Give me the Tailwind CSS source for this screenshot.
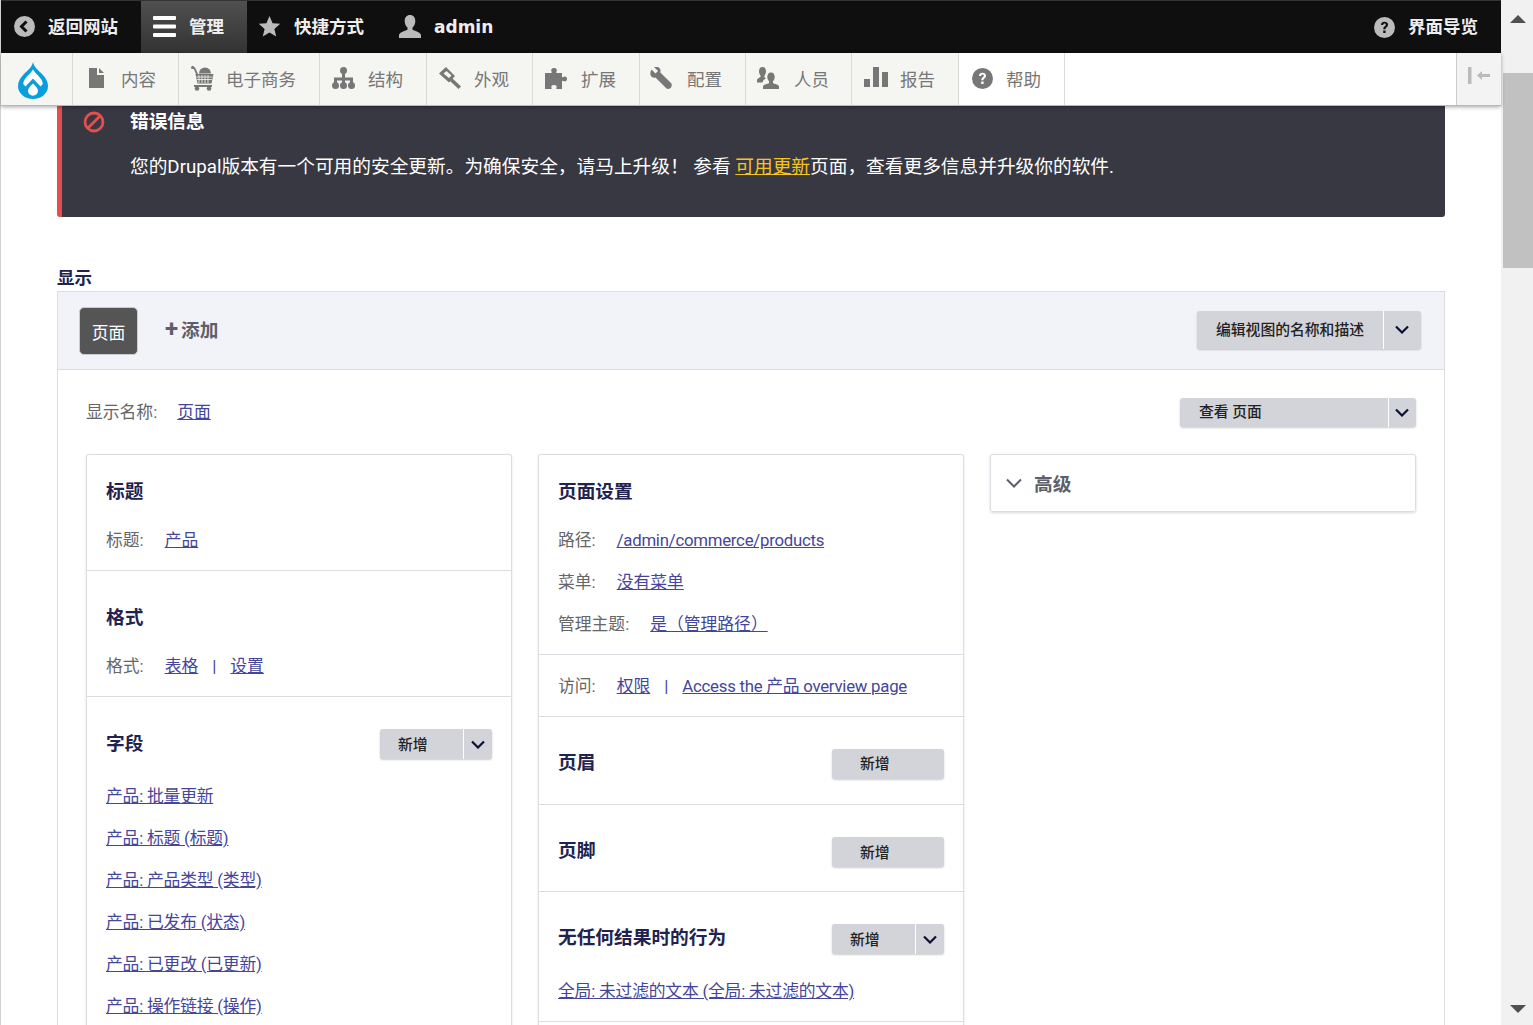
<!DOCTYPE html>
<html lang="zh-CN">
  <head>
    <meta charset="UTF-8" />
    <title>视图编辑</title>
    <script src="https://cdn.jsdelivr.net/npm/@tailwindcss/browser@4"></script>
  </head>
  <body class="h-screen overflow-hidden bg-white font-['Roboto','Noto_Sans_CJK_SC',sans-serif] text-[16.8px] text-[#666]">
    <div class="flex h-[1025px] w-[1533px]">
      <div class="flex h-full w-[1501px] flex-col border-l border-[#d0d0d0]">
        <!-- Top bar -->
        <div class="flex h-[53px] items-center justify-between border-t border-[#333] bg-[#0f0f0f] text-[17.5px] font-bold text-[#eee]">
          <div class="flex h-full items-center">
            <a class="flex h-full w-[140px] items-center pt-[1px]">
              <svg class="mb-[2px] ml-[13px] mr-[13px] size-[21px]" viewBox="0 0 21 21"><circle cx="10.5" cy="10.5" r="10.5" fill="#bbb" /><path d="M12.5 5.5 7.5 10.5l5 5" fill="none" stroke="#0f0f0f" stroke-width="3" /></svg>
              返回网站
            </a>
            <a class="flex h-full w-[106px] items-center bg-linear-to-b from-[#505050] to-[#333] pt-[1px]">
              <svg class="mb-[2px] ml-[12px] mr-[13px] h-[21px] w-[23px]" viewBox="0 0 23 21" fill="#fff"><rect width="23" height="4" rx="1" /><rect y="8.5" width="23" height="4" rx="1" /><rect y="17" width="23" height="4" rx="1" /></svg>
              管理
            </a>
            <a class="flex h-full w-[140px] items-center pt-[1px]">
              <svg class="mb-[3px] ml-[11px] mr-[13px] size-[23px]" viewBox="0 0 24 24" fill="#bbb"><path d="M12 1l3.2 7.5 8 .7-6.100 5.300 1.900 8L12 18.200 5 22.500l1.900-8L.8 9.200l8-.7z" /></svg>
              快捷方式
            </a>
            <a class="flex h-full items-center pt-[1px] font-['DejaVu_Sans',sans-serif] text-[17px]">
              <svg class="mb-[2px] ml-[12px] mr-[13px] h-[23px] w-[22px]" viewBox="0 0 22 23" fill="#bbb"><path d="M11 0c3.400 0 5.300 2.600 5.300 6 0 3-1.300 5.400-2.800 6.600v2.200c2.800 1.200 8.500 2.700 8.500 5.500V23H0v-2.700c0-2.800 5.700-4.300 8.500-5.500v-2.200C7 11.400 5.700 9 5.700 6 5.700 2.600 7.600 0 11 0z" /></svg>
              admin
            </a>
          </div>
          <a class="mr-[23px] flex items-center pt-[1px]">
            <svg class="mb-[1px] mr-[13px] size-[21px]" viewBox="0 0 21 21"><circle cx="10.500" cy="10.500" r="10.500" fill="#bbb" /><path d="M7 8c0-2 1.500-3.200 3.500-3.200S14 6 14 7.800c0 2.400-2.500 2.500-2.500 4.500H9.300c0-3 2.500-3 2.500-4.500 0-.8-.5-1.200-1.300-1.200S9.200 7.200 9.200 8z" fill="#0f0f0f" /><rect x="9.200" y="13.500" width="2.400" height="2.500" fill="#0f0f0f" /></svg>
            界面导览
          </a>
        </div>

        <!-- Tray -->
        <div class="relative z-10 flex h-[53px] border-b border-[#b8b8b8] bg-white text-[17.5px] text-[#777] shadow-[0_1px_4px_rgba(0,0,0,0.35)]">
          <a class="flex h-full w-[72px] items-center border-r border-[#d9d9d6] bg-[#f5f5f2]">
            <svg class="ml-[17px] mt-[3px] h-[37px] w-[30px]" viewBox="0 0 30 37">
              <path d="M15 0c1 5 5 8 9 12 4 4 6 8 6 12a15 13 0 0 1-30 0c0-4 2-8 6-12 4-4 8-7 9-12z" fill="#0a9fdc" />
              <path d="M15 7.500c1.500 2.500 3.500 4.500 5.500 6.500 2.500 2.500 4 5 4.300 8l-2.300 2.500L15 16.500 7.500 24.500 5.200 22c.3-3 1.800-5.500 4.300-8 2-2 4-4 5.500-6.500z" fill="#fff" />
              <path d="M15 21.500c2.200 2.200 5 4.500 5 7.200a5 5 0 0 1-10 0c0-2.700 2.800-5 5-7.200z" fill="#fff" />
            </svg>
          </a>
          <a class="flex h-full w-[106px] items-center border-r border-[#d9d9d6] bg-[#f5f5f2] pt-[2px]">
            <svg class="mb-[4px] ml-[16px] mr-[17px] h-[20px] w-[15px]" viewBox="0 0 15 20" fill="#777"><path d="M0 0h8v7h7v13H0zM10 0l5 5h-5z" /></svg>
            内容
          </a>
          <a class="flex h-full w-[141px] items-center border-r border-[#d9d9d6] bg-[#f5f5f2] pt-[2px]">
            <svg class="mb-[4px] ml-[12px] mr-[12px] h-[25px] w-[23px]" viewBox="0 0 23 25" fill="#777"><path d="M1 0c2 0 3 1.500 4 3.500L7 8h-2L3 3.500C2.500 2.500 2 2 1 2z" /><circle cx="1.500" cy="1.500" r="1.500" /><path d="M4.500 8h18l-2 9.500H6.500z" /><path d="M8 9v8M11 9v8M14 9v8M17 9v8M5.500 11h16M6 13.500h15" stroke="#f5f5f2" stroke-width=".8" /><path d="M8 7.500a6 6 0 0 1 12 0z" /><rect x="3" y="19" width="18" height="2" /><circle cx="6" cy="22.500" r="2.300" /><circle cx="18" cy="22.500" r="2.300" /></svg>
            电子商务
          </a>
          <a class="flex h-full w-[107px] items-center border-r border-[#d9d9d6] bg-[#f5f5f2] pt-[2px]">
            <svg class="mb-[4px] ml-[12px] mr-[13px] h-[22px] w-[23px]" viewBox="0 0 23 22" fill="#777"><circle cx="11.500" cy="3.500" r="3.500" /><rect x="10" y="5" width="3" height="12" /><path d="M2 17v-6.500h19V17h-3v-3.500H5V17z" /><circle cx="3.500" cy="18.500" r="3.500" /><circle cx="11.500" cy="18.500" r="3.500" /><circle cx="19.500" cy="18.500" r="3.500" /></svg>
            结构
          </a>
          <a class="flex h-full w-[106px] items-center border-r border-[#d9d9d6] bg-[#f5f5f2] pt-[2px]">
            <svg class="mb-[4px] ml-[12px] mr-[13px] size-[22px]" viewBox="0 0 22 22" fill="#777"><path d="M7 0l9 9-6 6.500L0 6.500zM4.500 6.500l5.500 4.500 2.500-2.500L7.500 4z" fill-rule="evenodd" /><path d="M13 11l9 8.500-2.500 2.500-9-8.500z" /></svg>
            外观
          </a>
          <a class="flex h-full w-[107px] items-center border-r border-[#d9d9d6] bg-[#f5f5f2] pt-[2px]">
            <svg class="mb-[4px] ml-[12px] mr-[14px] h-[21px] w-[22px]" viewBox="0 0 22 21" fill="#777"><path d="M0 5h6c1 0 1-1 .5-1.500C5.500 2 6.500 0 9 0s3.500 2 2.500 3.500C11 4 11 5 12 5h5v3.500c0 1 1 1 1.500.5 1.500-1 3.500-.2 3.500 2s-2 3-3.500 2c-.5-.5-1.500-.5-1.500.5V21h-5c-1 0-1-1-.5-1.500.8-1 0-2.500-2.500-2.500s-3.300 1.500-2.500 2.500C7 20 7 21 6 21H0z" /></svg>
            扩展
          </a>
          <a class="flex h-full w-[106px] items-center border-r border-[#d9d9d6] bg-[#f5f5f2] pt-[2px]">
            <svg class="mb-[4px] ml-[10px] mr-[15px] size-[22px]" viewBox="0 0 22 22" fill="#777"><path d="M1.500 2.500 5.500 6.500 8 4 4 0C7-1 10 .5 10.500 3c.2 1-.2 2-.2 2.500L21 16c1 1 1 3 0 4.500s-3.500 2-5 .5L5.500 10.500c-.5.2-1.500.3-2.500.1C.5 10-.8 6 1.500 2.500z" /></svg>
            配置
          </a>
          <a class="flex h-full w-[106px] items-center border-r border-[#d9d9d6] bg-[#f5f5f2] pt-[2px]">
            <svg class="mb-[4px] ml-[11px] mr-[15px] h-[22px] w-[22px]" viewBox="0 0 22 22" fill="#777"><path d="M5.500 0c2.500 0 3.500 2 3.500 4.500 0 1.700-.8 3-1.500 4v2l1.500.8c-2 1.200-3 2.200-3.500 4.200H0v-2.500c0-1.500 2.500-2.500 3.500-3v-1.500C2.800 7.500 2 6.200 2 4.500 2 2 3 0 5.500 0z" /><path d="M14 5.500c2.500 0 3.700 2 3.700 4.500 0 1.700-.7 3-1.700 4.200v2c1.500.7 6 1.300 6 3.500V22H6v-2.300c0-2.200 4.500-2.800 6-3.500v-2C11 13 10.300 11.700 10.300 10c0-2.500 1.200-4.500 3.700-4.500z" /></svg>
            人员
          </a>
          <a class="flex h-full w-[107px] items-center border-r border-[#d9d9d6] bg-[#f5f5f2] pt-[2px]">
            <svg class="mb-[6px] ml-[12px] mr-[12px] h-[20px] w-[24px]" viewBox="0 0 24 20" fill="#777"><rect y="12" width="6" height="8" /><rect x="9" width="6" height="20" /><rect x="18" y="5" width="6" height="15" /></svg>
            报告
          </a>
          <a class="flex h-full w-[106px] items-center border-r border-[#d9d9d6] bg-white pt-[2px]">
            <svg class="mb-[4px] ml-[13px] mr-[13px] size-[21px]" viewBox="0 0 21 21"><circle cx="10.500" cy="10.500" r="10.500" fill="#777" /><path d="M7 8c0-2 1.500-3.200 3.500-3.200S14 6 14 7.800c0 2.400-2.500 2.500-2.500 4.500H9.300c0-3 2.500-3 2.500-4.500 0-.8-.5-1.200-1.300-1.200S9.200 7.200 9.200 8z" fill="#fff" /><rect x="9.200" y="13.500" width="2.400" height="2.500" fill="#fff" /></svg>
            帮助
          </a>
          <div class="flex-1"></div>
          <button class="flex h-full w-[45px] items-center justify-center border-l border-[#ccc] bg-[#f3f3f3]">
            <svg class="mb-[7px] h-[17px] w-[22px]" viewBox="0 0 22 17" fill="#bbb"><rect width="3.500" height="17" /><path d="M9 8.500 14 4v3h8v3h-8v3z" /></svg>
          </button>
        </div>

        <!-- Page -->
        <div class="min-h-0 flex-1 overflow-hidden px-[56px]">
          <div class="relative flex h-[111px] flex-col rounded-b-[3px] border-l-[5px] border-[#e34f4f] bg-[#383843] pl-[68px] text-white">
            <svg class="absolute left-[21px] top-[5px] size-[22px]" viewBox="0 0 22 22" fill="none" stroke="#e34f4f" stroke-width="2.800"><circle cx="11" cy="11" r="9" /><path d="M5 17 17 5" /></svg>
            <h3 class="mt-[2px] text-[18.7px] leading-[28px] font-bold">错误信息</h3>
            <p class="mt-[17px] text-[18.7px] leading-[28px]">您的Drupal版本有一个可用的安全更新。为确保安全，请马上升级！ 参看 <a class="text-[#f5c518] underline">可用更新</a>页面，查看更多信息并升级你的软件.</p>
          </div>

          <h2 class="mt-[47px] h-[27px] text-[17.5px] leading-[29px] font-bold text-[#22224f]">显示</h2>
          <div class="h-[760px] border border-[#dcdce2]">
            <div class="flex h-[78px] items-center justify-between border-b border-[#dcdce2] bg-[#f2f3f8] pl-[21px] pr-[23px]">
              <div class="flex items-center">
                <a class="flex h-[48px] w-[59px] items-center justify-center rounded-[5px] border border-[#ccc] bg-[#555] pt-[6px] text-white">页面</a>
                <a class="ml-[27px] pt-[2px] text-[18.7px] font-bold text-[#5f5f6b]"><span class="mr-[3px] text-[24px] leading-[20px]">+</span>添加</a>
              </div>
              <div class="mb-[2px] flex h-[38px] w-[224px] items-center rounded-[3px] bg-[#d3d4d9] text-[14.8px] font-medium text-[#222] shadow-[0_1px_2px_rgba(0,0,0,0.2)]">
                <span class="flex-1 pl-[19px] pt-[2px]">编辑视图的名称和描述</span>
                <span class="flex h-full w-[38px] items-center justify-center border-l border-white pr-[2px]">
                  <svg class="h-[9px] w-[14px]" viewBox="0 0 14 9" fill="none" stroke="#0e1033" stroke-width="2.200"><path d="M1 1.500 7 7.500 13 1.500" /></svg>
                </span>
              </div>
            </div>

            <div class="px-[28px]">
              <div class="flex h-[84px] items-center justify-between">
                <div class="pt-[2px]">显示名称:<a class="ml-[20px] text-[#45459a] underline">页面</a></div>
                <div class="flex h-[29px] w-[236px] items-center rounded-[3px] bg-[#d3d4d9] text-[14.8px] font-medium text-[#222] shadow-[0_1px_2px_rgba(0,0,0,0.2)]">
                  <span class="flex-1 pl-[19px] pt-[1px]">查看 页面</span>
                  <span class="flex h-full w-[28px] items-center justify-center border-l border-white pr-[1px]">
                    <svg class="h-[9px] w-[14px]" viewBox="0 0 14 9" fill="none" stroke="#0e1033" stroke-width="2.200"><path d="M1 1.500 7 7.500 13 1.500" /></svg>
                  </span>
                </div>
              </div>

              <div class="grid grid-cols-[426px_426px_426px] items-start gap-[26px]">
                <!-- Column one -->
                <div class="rounded-t-[3px] border border-b-0 border-[#dcdce2] shadow-[0_1px_3px_rgba(0,0,0,0.1)]">
                  <section class="border-b border-[#dcdce2] px-[19px] pt-[19px] pb-[9px]">
                    <h3 class="mb-[11px] h-[34px] text-[18.7px] leading-[36px] font-bold text-[#22224f]">标题</h3>
                    <div class="h-[42px] leading-[43px]">标题:<a class="ml-[21px] text-[#45459a] underline">产品</a></div>
                  </section>
                  <section class="border-b border-[#dcdce2] px-[19px] pt-[29px] pb-[9px]">
                    <h3 class="mb-[11px] h-[34px] text-[18.7px] leading-[36px] font-bold text-[#22224f]">格式</h3>
                    <div class="h-[42px] leading-[43px]">格式:<a class="ml-[21px] text-[#45459a] underline">表格</a><span class="mx-[14px] text-[#45459a]">|</span><a class="text-[#45459a] underline">设置</a></div>
                  </section>
                  <section class="px-[19px] pt-[32px]">
                    <div class="mb-[16px] flex h-[30px] items-center justify-between">
                      <h3 class="text-[18.7px] font-bold text-[#22224f]">字段</h3>
                      <div class="flex h-[30px] w-[112px] items-center rounded-[3px] bg-[#d3d4d9] text-[14.8px] font-medium text-[#222] shadow-[0_1px_2px_rgba(0,0,0,0.2)]">
                        <span class="flex-1 pl-[18px] pt-[2px]">新增</span>
                        <span class="flex h-full w-[29px] items-center justify-center border-l border-white">
                          <svg class="h-[9px] w-[14px]" viewBox="0 0 14 9" fill="none" stroke="#0e1033" stroke-width="2.200"><path d="M1 1.500 7 7.500 13 1.500" /></svg>
                        </span>
                      </div>
                    </div>
                    <ul class="tracking-[-0.2px] text-[#45459a] underline">
                      <li class="h-[42px] leading-[42px]"><a>产品: 批量更新</a></li>
                      <li class="h-[42px] leading-[42px]"><a>产品: 标题 (标题)</a></li>
                      <li class="h-[42px] leading-[42px]"><a>产品: 产品类型 (类型)</a></li>
                      <li class="h-[42px] leading-[42px]"><a>产品: 已发布 (状态)</a></li>
                      <li class="h-[42px] leading-[42px]"><a>产品: 已更改 (已更新)</a></li>
                      <li class="h-[42px] leading-[42px]"><a>产品: 操作链接 (操作)</a></li>
                    </ul>
                  </section>
                </div>

                <!-- Column two -->
                <div class="rounded-t-[3px] border border-b-0 border-[#dcdce2] shadow-[0_1px_3px_rgba(0,0,0,0.1)]">
                  <section class="border-b border-[#dcdce2] px-[19px] pt-[19px] pb-[9px]">
                    <h3 class="mb-[11px] h-[34px] text-[18.7px] leading-[36px] font-bold text-[#22224f]">页面设置</h3>
                    <div class="h-[42px] leading-[43px]">路径:<a class="ml-[21px] tracking-[-0.25px] text-[#45459a] underline">/admin/commerce/products</a></div>
                    <div class="h-[42px] leading-[43px]">菜单:<a class="ml-[21px] text-[#45459a] underline">没有菜单</a></div>
                    <div class="h-[42px] leading-[43px]">管理主题:<a class="ml-[21px] text-[#45459a] underline">是（管理路径）</a></div>
                  </section>
                  <section class="flex h-[62px] items-center border-b border-[#dcdce2] px-[19px] pt-[2px]">
                    <div>访问:<a class="ml-[21px] text-[#45459a] underline">权限</a><span class="mx-[14px] text-[#45459a]">|</span><a class="tracking-[-0.25px] text-[#45459a] underline">Access the 产品 overview page</a></div>
                  </section>
                  <section class="flex h-[88px] items-center justify-between border-b border-[#dcdce2] px-[19px] pt-[6px]">
                    <h3 class="text-[18.7px] font-bold text-[#22224f]">页眉</h3>
                    <div class="flex h-[30px] w-[112px] items-center rounded-[3px] bg-[#d3d4d9] pl-[28px] pt-[2px] text-[14.8px] font-medium text-[#222] shadow-[0_1px_2px_rgba(0,0,0,0.2)]">新增</div>
                  </section>
                  <section class="flex h-[87px] items-center justify-between border-b border-[#dcdce2] px-[19px] pt-[6px]">
                    <h3 class="text-[18.7px] font-bold text-[#22224f]">页脚</h3>
                    <div class="mt-[2px] flex h-[30px] w-[112px] items-center rounded-[3px] bg-[#d3d4d9] pl-[28px] pt-[2px] text-[14.8px] font-medium text-[#222] shadow-[0_1px_2px_rgba(0,0,0,0.2)]">新增</div>
                  </section>
                  <section class="h-[130px] border-b border-[#dcdce2] px-[19px] pt-[32px]">
                    <div class="mb-[25px] flex h-[30px] items-center justify-between">
                      <h3 class="pb-[2px] text-[18.7px] font-bold text-[#22224f]">无任何结果时的行为</h3>
                      <div class="flex h-[30px] w-[112px] items-center rounded-[3px] bg-[#d3d4d9] text-[14.8px] font-medium text-[#222] shadow-[0_1px_2px_rgba(0,0,0,0.2)]">
                        <span class="flex-1 pl-[18px] pt-[2px]">新增</span>
                        <span class="flex h-full w-[29px] items-center justify-center border-l border-white">
                          <svg class="h-[9px] w-[14px]" viewBox="0 0 14 9" fill="none" stroke="#0e1033" stroke-width="2.200"><path d="M1 1.500 7 7.500 13 1.500" /></svg>
                        </span>
                      </div>
                    </div>
                    <a class="tracking-[-0.2px] text-[#45459a] underline">全局: 未过滤的文本 (全局: 未过滤的文本)</a>
                  </section>
                  <div class="h-[40px]"></div>
                </div>

                <!-- Column three -->
                <div class="flex h-[58px] items-center rounded-[3px] border border-[#dcdce2] pl-[15px] shadow-[0_1px_3px_rgba(0,0,0,0.15)]">
                  <svg class="mr-[12px] h-[10px] w-[16px]" viewBox="0 0 16 10" fill="none" stroke="#5f5f6b" stroke-width="2"><path d="M1 1.500 8 8.500 15 1.500" /></svg>
                  <span class="pt-[4px] text-[18.7px] font-bold text-[#5f5f6b]">高级</span>
                </div>
              </div>
            </div>
          </div>
        </div>
      </div>

      <!-- Scrollbar -->
      <div class="flex h-full w-[32px] flex-col bg-[#f1f1f1]">
        <div class="flex h-[37px] items-center justify-center pt-[1px]">
          <svg class="ml-[1px] h-[8px] w-[16px]" viewBox="0 0 16 8" fill="#505050"><path d="M8 0l8 8H0z" /></svg>
        </div>
        <div class="mt-[36px] ml-[2px] h-[195px] bg-[#c1c1c1]"></div>
        <div class="flex-1"></div>
        <div class="flex h-[32px] items-center justify-center">
          <svg class="ml-[1px] h-[8px] w-[16px]" viewBox="0 0 16 8" fill="#505050"><path d="M0 0h16L8 8z" /></svg>
        </div>
      </div>
    </div>
  </body>
</html>
